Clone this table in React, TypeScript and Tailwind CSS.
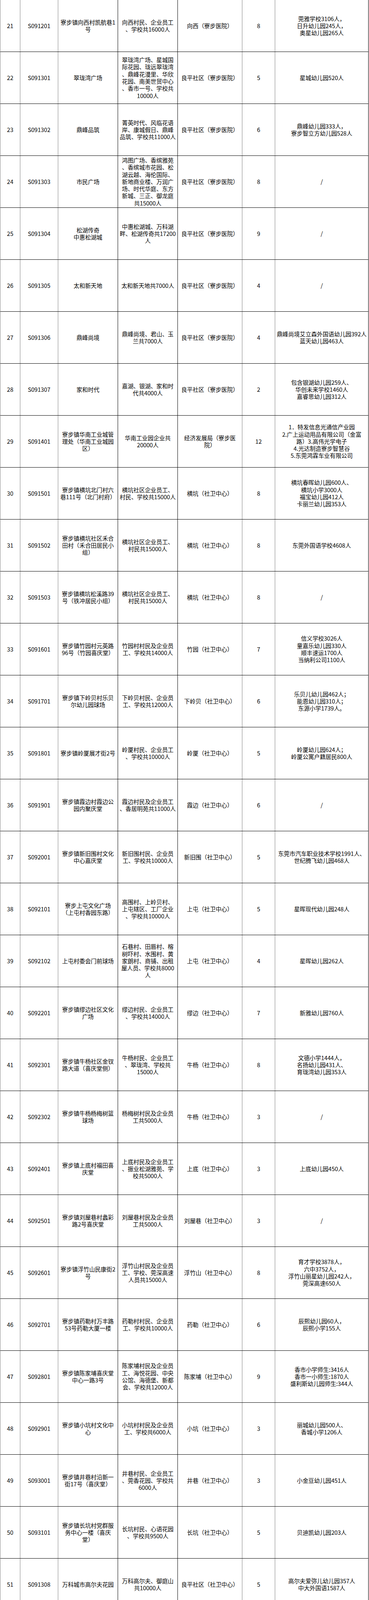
type Row = {
  no: number;
  code: string;
  site: string[];
  scope: string[];
  unit: string[];
  count: string;
  school: string[];
};

const LP = ['良平社区（寮步医院）'];
const LS = ['良平社区（社卫中心）'];
const JJ = ['经济发展局（社卫中', '心）'];

const rows: Row[] = [
  { no: 21, code: 'S091201', site: ['寮步镇向西村凯航巷1', '号'], scope: ['向西村民、企业员工', '、学校共16000人'], unit: ['向西（寮步医院）'], count: '8', school: ['莞雅学校3106人，', '日升幼儿园245人，', '奥星幼儿园265人'] },
  { no: 22, code: 'S091301', site: ['翠珑湾广场'], scope: ['翠珑湾广场、星城国', '际花园、珑远翠珑湾', '、鼎峰花漫里、华欣', '花园、南美世贸中心', '、香市一号、学校共', '10000人'], unit: LP, count: '5', school: ['星城幼儿园520人'] },
  { no: 23, code: 'S091302', site: ['鼎峰品筑'], scope: ['菁英时代、风临花语', '岸、康城假日、鼎峰', '品筑、学校共11000人'], unit: LP, count: '6', school: ['鼎峰幼儿园333人，', '寮步智立方幼儿园528人'] },
  { no: 24, code: 'S091303', site: ['市民广场'], scope: ['鸿图广场、香缤雅苑', '、香缤城市花园、松', '湖云越、海伦国际、', '新地商业楼、万润广', '场、时代华庭、东方', '新城、三正、御龙庭', '共15000人'], unit: LP, count: '8', school: ['/'] },
  { no: 25, code: 'S091304', site: ['松湖传奇', '中惠松湖城'], scope: ['中惠松湖城、万科湖', '畔、松湖传奇共17200', '人'], unit: LP, count: '9', school: ['/'] },
  { no: 26, code: 'S091305', site: ['太和新天地'], scope: ['太和新天地共7000人'], unit: LP, count: '4', school: ['/'] },
  { no: 27, code: 'S091306', site: ['鼎峰尚境'], scope: ['鼎峰尚境、君山、玉', '兰共7000人'], unit: LP, count: '4', school: ['鼎峰尚境艾立森外国语幼儿园392人', '蓝天幼儿园463人'] },
  { no: 28, code: 'S091307', site: ['家和时代'], scope: ['嘉湖、银湖、家和时', '代共4000人'], unit: LP, count: '2', school: ['包含银湖幼儿园259人、', '华创未来学校1460人', '嘉睿思幼儿园312人'] },
  { no: 29, code: 'S091401', site: ['寮步镇华南工业城管', '理处（华南工业城园', '区）'], scope: ['华南工业园企业共', '20000人'], unit: ['经济发展局（寮步医', '院）'], count: '12', school: ['1．特发信息光通信产业园', '2.广上运动用品有限公司（金富', '路）3.高伟光学电子', '4.光达制造寮步智慧谷', '5.东莞鸿霖车业有限公司'] },
  { no: 30, code: 'S091501', site: ['寮步镇横坑北门村六', '巷111号（北门村府）'], scope: ['横坑社区企业员工、', '村民、学校共15000人'], unit: ['横坑（社卫中心）'], count: '8', school: ['横坑春晖幼儿园600人、', '横坑小学3000人', '福宝幼儿园412人', '卡丽兰幼儿园353人'] },
  { no: 31, code: 'S091502', site: ['寮步镇横坑社区禾合', '田村（禾合田居民小', '组）'], scope: ['横坑社区企业员工、', '村民共15000人'], unit: ['横坑（社卫中心）'], count: '8', school: ['东莞外国语学校4608人'] },
  { no: 32, code: 'S091503', site: ['寮步镇横坑松溪路39', '号（铁冲居民小组）'], scope: ['横坑社区企业员工、', '村民共15000人'], unit: ['横坑（社卫中心）'], count: '8', school: ['/'] },
  { no: 33, code: 'S091601', site: ['寮步镇竹园村元英路', '96号（竹园喜庆堂）'], scope: ['竹园村村民及企业员', '工、学校共14000人'], unit: ['竹园（社卫中心）'], count: '7', school: ['信义学校3026人', '童嘉乐幼儿园330人', '顺丰速运1700人', '当纳利公司1100人'] },
  { no: 34, code: 'S091701', site: ['寮步镇下岭贝村乐贝', '尔幼儿园球场'], scope: ['下岭贝村民、企业员', '工、学校共12000人'], unit: ['下岭贝（社卫中心）'], count: '6', school: ['乐贝儿幼儿园462人；', '能恩幼儿园310人；', '东源小学1739人。'] },
  { no: 35, code: 'S091801', site: ['寮步镇岭厦展才街2号'], scope: ['岭厦村民、企业员工', '、学校共10000人'], unit: ['岭厦（社卫中心）'], count: '5', school: ['岭厦幼儿园624人；', '岭厦公寓户籍居民800人'] },
  { no: 36, code: 'S091901', site: ['寮步镇霞边村霞边公', '园内聚庆堂'], scope: ['霞边村民及企业员工', '、香居明苑共11000人'], unit: ['霞边（社卫中心）'], count: '6', school: ['/'] },
  { no: 37, code: 'S092001', site: ['寮步镇新旧围村文化', '中心嘉庆堂'], scope: ['新旧围村民、企业员', '工、学校共10000人'], unit: ['新旧围（社卫中心）'], count: '5', school: ['东莞市汽车职业技术学校1991人、', '世纪腾飞幼儿园468人'] },
  { no: 38, code: 'S092101', site: ['寮步上屯文化广场', '（上屯村香园东路）'], scope: ['高围村、上岭贝村、', '上屯辖区、工厂企业', '、学校共10000人'], unit: ['上屯（社卫中心）'], count: '5', school: ['星晖现代幼儿园248人'] },
  { no: 39, code: 'S092102', site: ['上屯村委会门前球场'], scope: ['石巷村、田唇村、榕', '树吓村、水围村、黄', '家朗村、商铺、出租', '屋人员、学校共8000', '人'], unit: ['上屯（社卫中心）'], count: '4', school: ['星晖幼儿园262人'] },
  { no: 40, code: 'S092201', site: ['寮步镇缪边社区文化', '广场'], scope: ['缪边村民、企业员工', '、学校共14000人'], unit: ['缪边（社卫中心）'], count: '7', school: ['新雅幼儿园760人'] },
  { no: 41, code: 'S092301', site: ['寮步镇牛杨社区金钗', '路大道（喜庆堂侧）'], scope: ['牛杨村民、企业员工', '、翠珑湾、学校共', '15000人'], unit: ['牛杨（社卫中心）'], count: '8', school: ['文德小学1444人，', '名扬幼儿园431人、', '育珑湾幼儿园353人'] },
  { no: 42, code: 'S092302', site: ['寮步镇牛杨杨梅树篮', '球场'], scope: ['杨梅树村民及企业员', '工共5000人'], unit: ['牛杨（社卫中心）'], count: '3', school: ['/'] },
  { no: 43, code: 'S092401', site: ['寮步镇上底村福田喜', '庆堂'], scope: ['上底村民及企业员工', '、振业松湖雅苑、学', '校共5000人'], unit: ['上底（社卫中心）'], count: '3', school: ['上底幼儿园450人'] },
  { no: 44, code: 'S092501', site: ['寮步镇刘屋巷村蠡彩', '路2号喜庆堂'], scope: ['刘屋巷村民及企业员', '工共5000人'], unit: ['刘屋巷（社卫中心）'], count: '3', school: ['/'] },
  { no: 45, code: 'S092601', site: ['寮步镇浮竹山民康街2', '号'], scope: ['浮竹山村民及企业员', '工、学校、莞深高速', '人员共15000人'], unit: ['浮竹山（社卫中心）'], count: '8', school: ['育才学校3878人，', '六中3752人，', '浮竹山丽星幼儿园242人，', '莞深高速650人'] },
  { no: 46, code: 'S092701', site: ['寮步镇药勒村万丰路', '53号药勒大厦一楼'], scope: ['药勒村村民、企业员', '工、学校共10000人'], unit: ['药勒（社卫中心）'], count: '6', school: ['辰熙幼儿园60人，', '辰熙小学155人'] },
  { no: 47, code: 'S092801', site: ['寮步镇陈家埔喜庆堂', '中心一路3号'], scope: ['陈家埔村民及企业员', '工、海悦花园、中央', '公馆、海德堡、新都', '会、学校共12000人'], unit: ['陈家埔（社卫中心）'], count: '9', school: ['香市小学师生:3416人', '香市一小师生:1870人', '盛利斯幼儿园师生:344人'] },
  { no: 48, code: 'S092901', site: ['寮步镇小坑村文化中', '心'], scope: ['小坑村村民及企业员', '工、学校共6000人'], unit: ['小坑（社卫中心）'], count: '3', school: ['丽城幼儿园500人、', '香城小学1206人'] },
  { no: 49, code: 'S093001', site: ['寮步镇井巷村沿新一', '街17号（喜庆堂）'], scope: ['井巷村民、企业员工', '、莞香花园、学校共', '6000人'], unit: ['井巷（社卫中心）'], count: '3', school: ['小金豆幼儿园451人'] },
  { no: 50, code: 'S093101', site: ['寮步镇长坑村党群服', '务中心一楼（喜庆', '堂）'], scope: ['长坑村民、心语花园', '、学校共9500人'], unit: ['长坑（社卫中心）'], count: '5', school: ['贝迪凯幼儿园203人'] },
  { no: 51, code: 'S091308', site: ['万科城市高尔夫花园'], scope: ['万科高尔夫、御庭山', '共10000人'], unit: LS, count: '5', school: ['高尔夫爱弥儿幼儿园357人', '中大外国语1587人'] },
  { no: 52, code: 'S091309', site: ['时富花园'], scope: ['卡丽兰、比华利、丰', '泰城、金湖、翠湖、', '时富花园共15000人'], unit: LS, count: '8', school: ['/'] },
  { no: 53, code: 'S091310', site: ['翠云轩花园'], scope: ['君逸名轩、东安花园', '、映月明轩、翠云轩', '共10000人'], unit: LS, count: '5', school: ['包含翠云轩幼儿园183人'] },
  { no: 54, code: 'S091311', site: ['玉珑湾花园'], scope: ['玉珑湾共6000人'], unit: LS, count: '3', school: [] },
  { no: 55, code: 'S091402', site: ['寮步镇寮城中路下岭', '贝段6号伟易达电子厂'], scope: ['伟易达电子厂员工共', '8000人'], unit: JJ, count: '4', school: ['/'] },
  { no: 56, code: 'S091403', site: ['寮步镇仁居路1号松湖', '智谷研发中心4号楼', '201室（香市科技产业', '园）'], scope: ['新城工业区、香市科', '技产业园共10000人'], unit: JJ, count: '6', school: ['/'] },
  { no: 57, code: 'S091404', site: ['百业路67号之二（百', '业东三路与百业路交', '汇处）'], scope: ['百业工业城园区、汽', '配城共7000人'], unit: JJ, count: '4', school: ['/'] },
  { no: 58, code: 'S093201', site: ['城市学院综合馆'], scope: ['城市学院、艾立森幼', '儿园共21000人'], unit: ['教育中心（社卫中心）'], count: '11', school: ['艾立森幼儿园346人'] },
];

// one table cell, every line kept as the reference wraps it
function Cell({ lines, className }: { lines: string[]; className: string }) {
  return (
    <div className={`flex flex-col items-center justify-center text-center border-r ${className}`}>
      {lines.map((line, i) => (
        <div key={i} className="whitespace-nowrap">
          {line}
        </div>
      ))}
    </div>
  );
}

export default function App() {
  return (
    <div className="w-[944px] bg-white text-black">
      <div className="w-[943px] border-l border-[#808080] font-['Noto_Sans_CJK_SC',sans-serif] text-[14.67px] leading-[18.33px]">
        {rows.map((r) => (
          <div
            key={r.no}
            className="grid h-[133px] grid-cols-[51px_97px_153px_153px_165px_84px_239px] border-b border-black"
          >
            <Cell lines={[String(r.no)]} className="border-[#808080]" />
            <Cell lines={[r.code]} className="border-[#808080]" />
            <Cell lines={r.site} className="border-black" />
            <Cell lines={r.scope} className="border-black" />
            <Cell lines={r.unit} className="border-[#808080]" />
            <Cell lines={[r.count]} className="border-[#808080]" />
            <Cell lines={r.school} className="border-black" />
          </div>
        ))}
      </div>
    </div>
  );
}
